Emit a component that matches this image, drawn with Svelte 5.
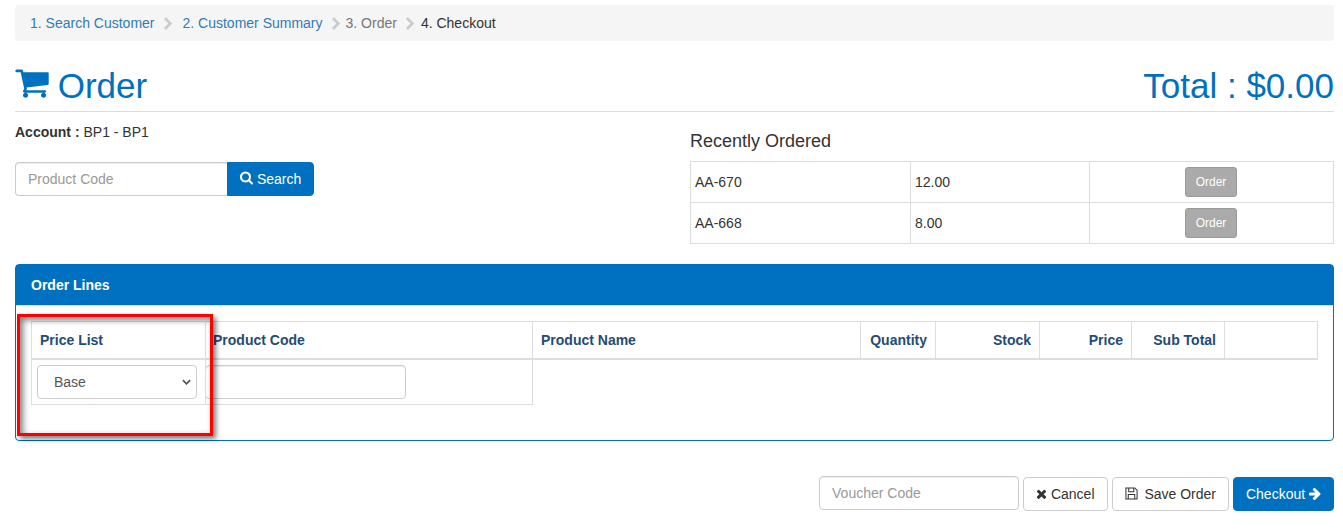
<script>
  const cart = "M640 1408q0 52-38 90t-90 38-90-38-38-90 38-90 90-38 90 38 38 90zm896 0q0 52-38 90t-90 38-90-38-38-90 38-90 90-38 90 38 38 90zm128-1088v512q0 24-16.500 42.500t-40.500 21.500l-1044 122q13 60 13 70 0 16-24 64h920q26 0 45 19t19 45-19 45-45 19h-1024q-26 0-45-19t-19-45q0-11 8-31.500t16-36 21.500-40 15.500-29.500l-177-823h-204q-26 0-45-19t-19-45 19-45 45-19h256q16 0 28.500 6.500t19.500 15.500 13 24.500 8 26 5.500 29.500 4.500 26h1201q26 0 45 19t19 45z";
  const search = "M1152 704q0-185-131.500-316.500t-316.500-131.500-316.500 131.500-131.500 316.500 131.500 316.500 316.500 131.500 316.500-131.500 131.500-316.500zm512 832q0 52-38 90t-90 38q-54 0-90-38l-343-342q-179 124-399 124-143 0-273.500-55.500t-225-150-150-225-55.500-273.500 55.500-273.500 150-225 225-150 273.500-55.500 273.500 55.500 225 150 150 225 55.500 273.500q0 220-124 399l343 343q37 37 37 90z";
  const times = "M1298 1298q0 40-28 68l-136 136q-28 28-68 28t-68-28l-294-294-294 294q-28 28-68 28t-68-28l-136-136q-28-28-28-68t28-68l294-294-294-294q-28-28-28-68t28-68l136-136q28-28 68-28t68 28l294 294 294-294q28-28 68-28t68 28l136 136q28 28 28 68t-28 68l-294 294 294 294q28 28 28 68z";
  const arrow = "M1472 960q0 54-37 91l-651 651q-39 37-91 37-51 0-90-37l-75-75q-38-38-38-91t38-91l293-293h-704q-52 0-84.500-37.500t-32.500-90.500v-128q0-53 32.500-90.500t84.500-37.500h704l-293-294q-38-36-38-90t38-90l75-75q38-38 90-38 53 0 91 38l651 651q37 35 37 90z";
  const chev = "M1171 960q0 26-19 45l-742 742q-19 19-45 19t-45-19l-166-166q-19-19-19-45t19-45l531-531-531-531q-19-19-19-45t19-45l166-166q19-19 45-19t45 19l742 742q19 19 19 45z";
  const crumbs = [
    { t: "1. Search Customer", c: "link" },
    { t: "2. Customer Summary", c: "link" },
    { t: "3. Order", c: "muted" },
    { t: "4. Checkout", c: "current" }
  ];
  const recent = [["AA-670", "12.00"], ["AA-668", "8.00"]];
</script>

<div class="page">
  <nav class="crumbs">
    {#each crumbs as c, i}
      {#if i > 0}
        <svg class="chev" viewBox="0 0 1280 1792"><path d={chev} /></svg>
      {/if}
      <span class={c.c}>{c.t}</span>
    {/each}
  </nav>

  <header class="head">
    <h1><svg class="cart" viewBox="0 0 1664 1792"><path d={cart} /></svg> Order</h1>
    <h1>Total : $0.00</h1>
  </header>

  <div class="mid">
    <div class="left">
      <p class="account"><b>Account :</b> BP1 - BP1</p>
      <div class="search">
        <input class="ctl" placeholder="Product Code" />
        <button class="btn primary joined"><svg class="ic find" viewBox="0 0 1664 1792"><path d={search} /></svg> Search</button>
      </div>
    </div>
    <div class="right">
      <h4>Recently Ordered</h4>
      <table class="recent">
        <tbody>
          {#each recent as r}
            <tr>
              <td class="r1">{r[0]}</td>
              <td class="r2">{r[1]}</td>
              <td class="r3"><button class="order">Order</button></td>
            </tr>
          {/each}
        </tbody>
      </table>
    </div>
  </div>

  <section class="panel">
    <div class="panel-head">Order Lines</div>
    <div class="panel-body">
      <table class="lines">
        <thead>
          <tr>
            <th class="c1">Price List</th>
            <th class="c2">Product Code</th>
            <th class="c3">Product Name</th>
            <th class="c4 ra">Quantity</th>
            <th class="c5 ra">Stock</th>
            <th class="c6 ra">Price</th>
            <th class="c7 ra">Sub Total</th>
            <th class="c8"></th>
          </tr>
        </thead>
        <tbody>
          <tr>
            <td class="sel">
              <div class="select"><span>Base</span>
                <svg viewBox="0 0 10 6"><path d="M1 1l4 4 4-4" fill="none" stroke="#555" stroke-width="2" /></svg>
              </div>
            </td>
            <td class="code"><input class="ctl codein" /></td>
          </tr>
        </tbody>
      </table>
    </div>
    <div class="mark"></div>
  </section>

  <footer class="foot">
    <input class="ctl voucher" placeholder="Voucher Code" />
    <button class="btn plain"><svg class="ic x" viewBox="0 0 1408 1792"><path d={times} /></svg> Cancel</button>
    <button class="btn plain save">
      <svg class="floppy" viewBox="0 0 14 14"><path d="M1 1h9.500L13 3.500V13H1z M4 1v4h5.500V1 M3.500 13V8h7v5" fill="none" stroke="#333" stroke-width="1.100" /></svg>
      Save Order
    </button>
    <button class="btn primary checkout">Checkout <svg class="ic go" viewBox="0 0 1536 1792"><path d={arrow} /></svg></button>
  </footer>
</div>

<style>
  :global(body) {
    margin: 0;
    background: #fff;
    color: #333;
    font-family: "Liberation Sans", Arial, sans-serif;
    font-size: 14px;
    line-height: 20px;
  }
  .page {
    padding: 5px 9px 0 15px;
  }
  .crumbs {
    display: flex;
    align-items: center;
    height: 36px;
    padding: 0 15px;
    background: #f5f5f5;
    border-radius: 4px;
  }
  .link { color: #337ab7; }
  .muted { color: #777; }
  .current { color: #333; }
  .chev {
    width: 10px;
    height: 14px;
    margin: 0 10px 0 8px;
    fill: #ccc;
  }
  .chev:nth-of-type(2) { margin: 0 5px 0 8px; }
  .chev:nth-of-type(3) { margin: 0 6px 0 8px; }
  .head {
    display: flex;
    justify-content: space-between;
    margin-top: 25px;
    padding-bottom: 5px;
    border-bottom: 1px solid #ddd;
  }
  h1 {
    margin: 0;
    font-size: 35px;
    font-weight: 400;
    line-height: 40px;
    color: #0070c0;
  }
  .cart {
    width: 34px;
    height: 36px;
    margin-right: -1px;
    fill: #0070c0;
    vertical-align: -5px;
  }
  .mid {
    display: grid;
    grid-template-columns: 675px 1fr;
  }
  .left { padding-top: 10px; }
  .account { margin: 0 0 20px; }
  .search { display: flex; }
  .ctl {
    box-sizing: border-box;
    height: 34px;
    padding: 6px 12px;
    border: 1px solid #ccc;
    border-radius: 4px;
    font: inherit;
    color: #555;
    background: #fff;
    box-shadow: inset 0 1px 1px rgba(0,0,0,.075);
    outline: none;
  }
  .ctl::placeholder { color: #999; opacity: 1; }
  .search .ctl {
    width: 212px;
    border-radius: 4px 0 0 4px;
    border-right: 0;
  }
  .btn {
    box-sizing: border-box;
    height: 34px;
    padding: 6px 12px;
    border: 1px solid #ccc;
    border-radius: 4px;
    font: inherit;
    white-space: nowrap;
  }
  .primary {
    background: #0070c0;
    border-color: #0070c0;
    color: #fff;
  }
  .joined { border-radius: 0 4px 4px 0; }
  .ic {
    width: 14px;
    height: 15px;
    fill: currentColor;
    vertical-align: -2px;
  }
  .find { width: 13px; }
  .right { padding-top: 19px; }
  h4 {
    margin: 0 0 10px;
    font-size: 18px;
    font-weight: 400;
    line-height: 20px;
    color: #333;
  }
  table { border-collapse: collapse; table-layout: fixed; }
  .recent { width: 644px; }
  .recent td {
    height: 40px;
    box-sizing: border-box;
    padding: 5px 5px 5px 4px;
    border: 1px solid #ddd;
  }
  .r1 { width: 220px; }
  .r2 { width: 179px; }
  .recent td.r3 { text-align: center; padding: 5px 6px 5px 4px; }
  .order {
    display: block;
    box-sizing: border-box;
    width: 52px;
    height: 30px;
    margin: 0 auto;
    padding: 0 0 0 1px;
    background: #aaa;
    border: 1px solid #999;
    border-radius: 3px;
    color: #fff;
    font: 12px/18px "Liberation Sans", Arial, sans-serif;
  }
  .panel {
    position: relative;
    margin-top: 20px;
    height: 177px;
    box-sizing: border-box;
    border: 1px solid #0070c0;
    border-radius: 4px;
  }
  .panel-head {
    height: 40px;
    padding: 0 15px;
    background: #0070c0;
    color: #fff;
    font-weight: 700;
    line-height: 40px;
  }
  .panel-body {
    padding: 15px 15px 0;
    border-top: 1px solid #bce8f1;
  }
  .lines { width: 1287px; }
  .lines th {
    height: 37px;
    box-sizing: border-box;
    padding: 8px;
    border: 1px solid #ddd;
    border-bottom-width: 2px;
    color: #234b78;
    text-align: left;
  }
  .lines th.ra { text-align: right; }
  .lines th.c2 { padding-left: 7px; }
  .c1 { width: 174px; }
  .c2 { width: 327px; }
  .c3 { width: 328px; }
  .c4 { width: 75px; }
  .c5 { width: 104px; }
  .c6 { width: 92px; }
  .c7 { width: 93px; }
  .lines td {
    height: 45px;
    box-sizing: border-box;
    border: 1px solid #ddd;
    padding: 5px;
  }
  .lines td.code { padding-left: 0; }
  .codein { display: block; width: 201px; margin-left: -1px; }
  .select {
    display: flex;
    align-items: center;
    justify-content: space-between;
    box-sizing: border-box;
    width: 160px;
    height: 34px;
    padding: 0 5px 0 16px;
    border: 1px solid #ccc;
    border-radius: 4px;
    color: #555;
  }
  .select svg { width: 9px; height: 6px; }
  .mark {
    position: absolute;
    left: 1px;
    top: 49px;
    width: 196px;
    height: 122px;
    box-sizing: border-box;
    border: 3px solid #f00;
    box-shadow: 3px 3px 5px rgba(0,0,0,.5), inset 3px 3px 6px rgba(0,0,0,.5);
    pointer-events: none;
  }
  .foot {
    display: flex;
    justify-content: flex-end;
    align-items: flex-start;
    gap: 4px;
    margin-top: 35px;
  }
  .voucher { width: 200px; }
  .plain { background: #fff; color: #333; margin-top: 1px; }
  .foot .primary { margin-top: 1px; }
  .checkout { width: 101px; padding: 6px 0; }
  .go { width: 12px; }
  .x { width: 11px; height: 14px; vertical-align: -2px; }
  .floppy { width: 13px; height: 13px; margin-right: 3px; vertical-align: -1px; }
</style>
